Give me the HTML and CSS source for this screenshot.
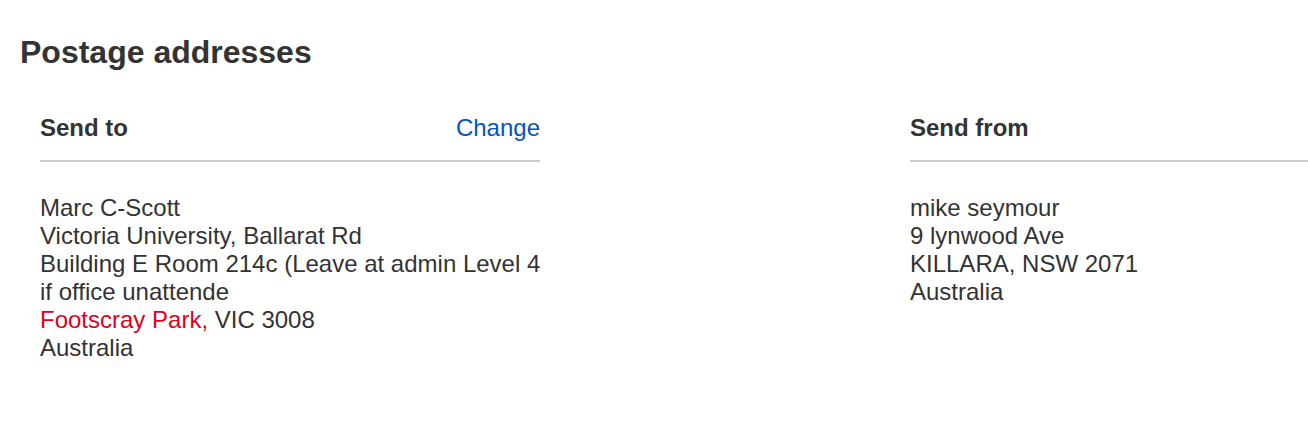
FILE: index.html
```html
<!DOCTYPE html>
<html>
<head>
<meta charset="utf-8">
<link rel="stylesheet" href="styles.css">
</head>
<body>
<main class="page">
  <h1 class="title">Postage addresses</h1>
  <div class="columns">
    <section class="col">
      <div class="col-head">
        <h2 class="col-title">Send to</h2>
        <a class="change" href="#">Change</a>
      </div>
      <div class="address">
        <div>Marc C-Scott</div>
        <div>Victoria University, Ballarat Rd</div>
        <div>Building E Room 214c (Leave at admin Level 4</div>
        <div>if office unattende</div>
        <div><span class="err">Footscray Park,</span> VIC 3008</div>
        <div>Australia</div>
      </div>
    </section>
    <section class="col">
      <div class="col-head">
        <h2 class="col-title">Send from</h2>
      </div>
      <div class="address">
        <div>mike seymour</div>
        <div>9 lynwood Ave</div>
        <div>KILLARA, NSW 2071</div>
        <div>Australia</div>
      </div>
    </section>
  </div>
</main>
</body>
</html>
```
FILE: styles.css
```css
html, body {
  margin: 0;
  padding: 0;
  background: #fff;
  overflow: hidden;
}
body {
  font-family: "Liberation Sans", Arial, Helvetica, sans-serif;
  color: #333;
}
.page {
  padding: 32px 0 0 20px;
}
.title {
  margin: 0;
  font-size: 32px;
  font-weight: bold;
  line-height: 40px;
  color: #333;
}
.columns {
  display: grid;
  grid-template-columns: 500px 398px;
  column-gap: 370px;
  padding-left: 20px;
  margin-top: 42px;
}
.col-head {
  display: flex;
  justify-content: space-between;
  align-items: flex-start;
  height: 46px;
  border-bottom: 2px solid #ccc;
}
.col-title {
  margin: 0;
  font-size: 24px;
  font-weight: bold;
  line-height: 28px;
}
.change {
  font-size: 24px;
  line-height: 28px;
  color: #0654ba;
  text-decoration: none;
}
.address {
  margin-top: 32px;
  font-size: 24px;
  line-height: 28px;
  white-space: nowrap;
}
.err {
  color: #e0001b;
}
```
